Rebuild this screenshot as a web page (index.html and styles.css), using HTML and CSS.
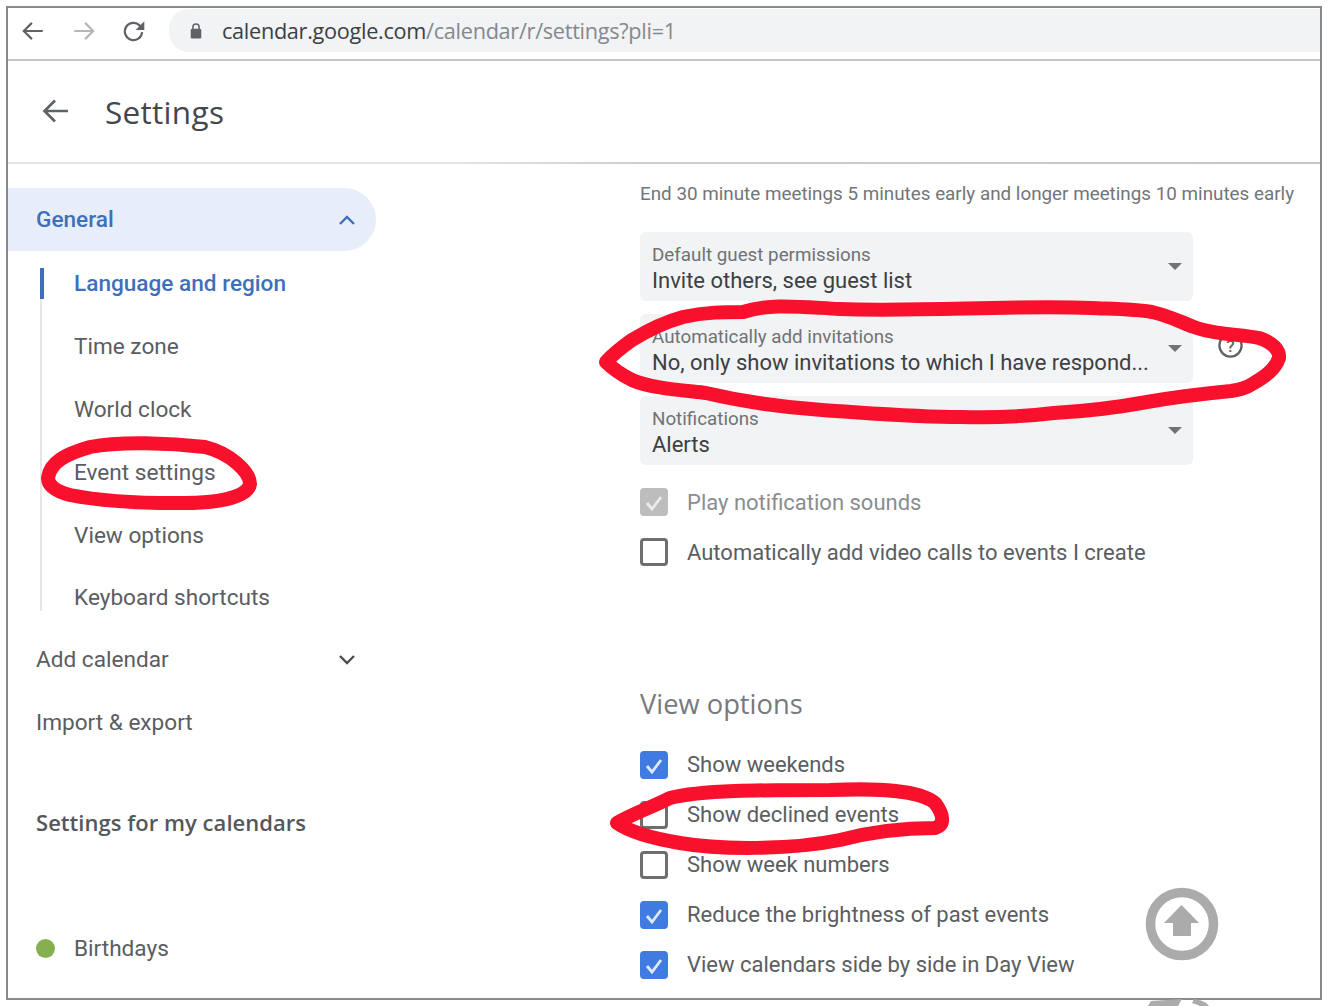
FILE: index.html
```html
<!DOCTYPE html>
<html lang="en">
<head>
<meta charset="utf-8">
<title>Settings</title>
<link rel="stylesheet" href="styles.css">
</head>
<body>
<div class="frame">
  <div class="toolbar">
    <svg class="nav-icon" viewBox="0 0 24 24"><path d="M21 12H4M11 4.500 3.500 12l7.500 7.500" fill="none" stroke="#5f6368" stroke-width="2"/></svg>
    <svg class="nav-icon" viewBox="0 0 24 24"><path d="M3 12h17M13 4.500l7.500 7.500-7.500 7.500" fill="none" stroke="#b4b6b9" stroke-width="2"/></svg>
    <svg class="nav-icon" viewBox="0 0 24 24"><path d="M19.500 13a8 8 0 1 1-2.300-6.200L20 9.500" fill="none" stroke="#5f6368" stroke-width="2"/><path d="M21.500 3v8h-8z" fill="#5f6368"/></svg>
    <div class="omnibox">
      <svg class="lock" viewBox="0 0 16 20"><path d="M4.500 8V5.500a3.500 3.500 0 0 1 7 0V8" fill="none" stroke="#5f6368" stroke-width="1.800"/><rect x="2" y="7.500" width="12" height="11" rx="1.500" fill="#5f6368"/></svg>
      <span class="url"><span class="host">calendar.google.com</span>/calendar/r/settings?pli=1</span>
    </div>
  </div>
  <header class="app-header">
    <svg class="back" viewBox="0 0 28 28"><path d="M26 14H3M13 3.500 2.500 14 13 24.500" fill="none" stroke="#5f6368" stroke-width="2.700"/></svg>
    <h1 class="title">Settings</h1>
  </header>
  <div class="main">
    <nav class="sidebar">
      <div class="nav-general">
        <span>General</span>
        <svg class="chev" viewBox="0 0 18 12"><path d="M2 10l7-7 7 7" fill="none" stroke="#3f6fba" stroke-width="2.400"/></svg>
      </div>
      <div class="subnav">
        <a class="sub-item active">Language and region</a>
        <a class="sub-item">Time zone</a>
        <a class="sub-item">World clock</a>
        <a class="sub-item">Event settings</a>
        <a class="sub-item">View options</a>
        <a class="sub-item">Keyboard shortcuts</a>
      </div>
      <div class="nav-row">
        <span>Add calendar</span>
        <svg class="chev" viewBox="0 0 18 12"><path d="M2 2l7 7 7-7" fill="none" stroke="#4a4d51" stroke-width="2.400"/></svg>
      </div>
      <div class="nav-row">Import &amp; export</div>
      <div class="nav-heading">Settings for my calendars</div>
      <div class="calendar-row"><span class="dot"></span><span>Birthdays</span></div>
    </nav>
    <section class="content">
      <p class="hint">End 30 minute meetings 5 minutes early and longer meetings 10 minutes early</p>
      <div class="selects">
        <div class="select"><div class="select-text"><div class="select-label">Default guest permissions</div><div class="select-value">Invite others, see guest list</div></div><span class="caret"></span></div>
        <div class="select-wrap">
          <div class="select"><div class="select-text"><div class="select-label">Automatically add invitations</div><div class="select-value">No, only show invitations to which I have respond...</div></div><span class="caret"></span></div>
          <svg class="help" viewBox="0 0 28 28"><circle cx="14" cy="14" r="11.500" fill="none" stroke="#5f6368" stroke-width="2.400"/><text x="14" y="20.500" text-anchor="middle" class="help-q">?</text></svg>
        </div>
        <div class="select"><div class="select-text"><div class="select-label">Notifications</div><div class="select-value">Alerts</div></div><span class="caret"></span></div>
      </div>
      <div class="checks-a">
        <label class="check disabled"><span class="box on grey"><svg viewBox="0 0 28 28"><path d="M7 15l5 6 9-12" fill="none" stroke="#ececec" stroke-width="2.800"/></svg></span>Play notification sounds</label>
        <label class="check"><span class="box"></span>Automatically add video calls to events I create</label>
      </div>
      <h2 class="section-title">View options</h2>
      <div class="checks-b">
        <label class="check"><span class="box on"><svg viewBox="0 0 28 28"><path d="M7 15l5 6 9-12" fill="none" stroke="#dfe9fb" stroke-width="2.800"/></svg></span>Show weekends</label>
        <label class="check"><span class="box"></span>Show declined events</label>
        <label class="check"><span class="box"></span>Show week numbers</label>
        <label class="check"><span class="box on"><svg viewBox="0 0 28 28"><path d="M7 15l5 6 9-12" fill="none" stroke="#dfe9fb" stroke-width="2.800"/></svg></span>Reduce the brightness of past events</label>
        <label class="check"><span class="box on"><svg viewBox="0 0 28 28"><path d="M7 15l5 6 9-12" fill="none" stroke="#dfe9fb" stroke-width="2.800"/></svg></span>View calendars side by side in Day View</label>
      </div>
    </section>
  </div>
</div>
<svg class="overlay" viewBox="0 0 1330 1006">
  <g fill="none" stroke="#f8102c" stroke-width="14" stroke-linejoin="round" stroke-linecap="round">
    <path d="M48 478C50 462 66 454 90 447C120 441 170 443 205 447C230 453 250 472 250 484C248 498 215 504 175 503C130 503 95 500 70 495C55 491 48 485 48 478Z"/>
    <path d="M606 362C615 352 625 345 632 340C650 329 665 322 683 317C705 312 725 312 743 312C770 303 800 307 840 309C920 312 1010 305 1091 308C1115 309 1135 309 1152 312C1170 316 1180 322 1194 327C1215 335 1240 334 1259 338C1272 342 1280 350 1279 358C1275 370 1264 377 1254 383C1245 389 1238 390 1231 391C1200 394 1175 397 1147 402C1120 407 1090 411 1054 413C1020 417 990 418 961 417C915 417 870 413 822 410C780 407 740 401 706 393C680 390 650 388 632 380C620 374 612 368 606 362Z"/>
    <path d="M617 823C630 815 650 808 670 798C700 790 760 790 830 790C880 788 920 790 935 803C944 815 945 825 935 828C900 828 870 832 840 840C790 850 720 850 680 843C650 838 630 832 617 823Z"/>
  </g>
  <circle cx="1182" cy="924" r="31.500" fill="#fff" stroke="#ababab" stroke-width="9.500"/>
  <path d="M1181.500 905l17.500 18h-8v13h-18v-13h-9z" fill="#ababab"/>
  <path d="M1148 1006l3-5 31-2-4 7zM1194 999c7 1 12 3 15 7h-9c-2-1-5-2-8-3z" fill="#ababab"/>
</svg>
</body>
</html>
```
FILE: styles.css
```css
* { box-sizing: border-box; }
html, body { margin: 0; padding: 0; }
body { width: 1330px; height: 1006px; overflow: hidden; background: #fff; font-family: Roboto, "Liberation Sans", sans-serif; color: #5a5d61; position: relative; }
.frame { margin: 6px 0 0 6px; width: 1316px; height: 994px; border: 2px solid #8a8a8a; background: #fff; display: flex; flex-direction: column; overflow: hidden; }
.toolbar { height: 53px; flex: none; border-bottom: 2px solid #c4c4c4; display: flex; align-items: flex-start; padding: 1px 0 0 12px; gap: 24.500px; }
.nav-icon { width: 26px; height: 26px; margin-top: 9px; flex: none; }
.omnibox { flex: 1; height: 43px; margin-left: -3px; background: #f1f3f4; border-radius: 20px 0 0 20px; display: flex; align-items: center; padding-left: 20px; gap: 19.500px; }
.lock { width: 14px; height: 18px; flex: none; }
.url { font-size: 21.700px; color: #85888c; white-space: nowrap; font-family: "Open Sans", Roboto, sans-serif; letter-spacing: -0.3px; }
.host { color: #3c4043; }
.app-header { height: 103px; flex: none; border-bottom: 2px solid #d9d9d9; border-image: linear-gradient(90deg, #e6e6e6 0, #e6e6e6 33%, #cdcdcd 48%, #c6c6c6 100%) 1; display: flex; align-items: center; padding-left: 34px; padding-bottom: 1px; }
.back { width: 28px; height: 28px; flex: none; }
.title { margin: 0 0 0 35px; font-weight: 400; font-size: 31.500px; color: #44474b; font-family: "Open Sans", Roboto, sans-serif; letter-spacing: 0.3px; }
.main { flex: 1; display: flex; min-height: 0; }
.sidebar { width: 631px; flex: none; padding-top: 24px; font-size: 22.600px; }
.nav-general { width: 368px; height: 63px; background: #e7eefa; border-radius: 0 32px 32px 0; color: #3f6fba; font-weight: 500; display: flex; align-items: center; justify-content: space-between; padding: 0 20px 0 28px; }
.chev { width: 18px; height: 12px; flex: none; }
.subnav { margin: 1px 0 -1px 32px; position: relative; }
.subnav::before { content: ""; position: absolute; left: 0; top: 16px; bottom: 18px; width: 2px; background: #e6e6e6; }
.sub-item { display: flex; align-items: center; height: 62.900px; padding-left: 34px; color: #5a5d61; }
.sub-item.active { color: #3f6fba; font-weight: 500; position: relative; }
.sub-item.active::before { content: ""; position: absolute; left: 0; top: 16px; width: 4px; height: 31px; background: #3f6fba; }
.nav-row { width: 368px; height: 63px; display: flex; align-items: center; justify-content: space-between; padding: 0 20px 0 28px; }
.nav-heading { margin-top: 36px; padding-left: 28px; height: 63px; display: flex; align-items: center; font-family: "Open Sans", Roboto, sans-serif; font-weight: 600; font-size: 22px; letter-spacing: 0.04px; color: #54575b; }
.calendar-row { margin-top: 80px; padding-left: 28px; display: flex; align-items: center; gap: 19px; height: 30px; }
.dot { width: 19px; height: 19px; border-radius: 50%; background: #86b04f; flex: none; }
.content { flex: 1; padding: 17px 0 0 1px; font-size: 22px; min-width: 0; }
.hint { margin: 0; font-size: 18.840px; line-height: 27px; color: #72757a; white-space: nowrap; }
.selects { margin-top: 24px; display: flex; flex-direction: column; gap: 13px; }
.select-wrap { display: flex; align-items: center; gap: 24px; }
.select { width: 553px; height: 69px; background: #f1f3f4; border-radius: 6px; display: flex; align-items: center; justify-content: space-between; padding: 3px 11px 0 12px; }
.select-label { font-size: 18.800px; line-height: 24px; color: #6f7276; white-space: nowrap; }
.select-value { font-size: 22px; line-height: 27px; color: #3c4043; white-space: nowrap; }
.caret { width: 0; height: 0; border-left: 7px solid transparent; border-right: 7px solid transparent; border-top: 7px solid #707377; margin-top: -3px; }
.help { width: 27px; height: 27px; flex: none; margin-top: -6px; }
.help-q { font: 500 18px Roboto, sans-serif; fill: #5f6368; }
.checks-a { margin-top: 23px; display: flex; flex-direction: column; gap: 22px; }
.check { display: flex; align-items: center; gap: 19px; height: 28px; white-space: nowrap; color: #5a5d61; }
.check.disabled { color: #8a8c90; }
.box { width: 28px; height: 28px; border: 3px solid #6e6e6e; border-radius: 4px; flex: none; display: block; background: #fff; }
.box.on { border: 0; background: #3f7be0; }
.box.grey { background: #bdbdbd; }
.box svg { width: 100%; height: 100%; display: block; }
.section-title { margin: 120px 0 0; font-size: 27.300px; line-height: 36px; font-weight: 400; color: #77797d; font-family: "Open Sans", Roboto, sans-serif; }
.checks-b { margin-top: 28.500px; display: flex; flex-direction: column; gap: 22px; }
.overlay { position: absolute; left: 0; top: 0; width: 1330px; height: 1006px; pointer-events: none; }
```
